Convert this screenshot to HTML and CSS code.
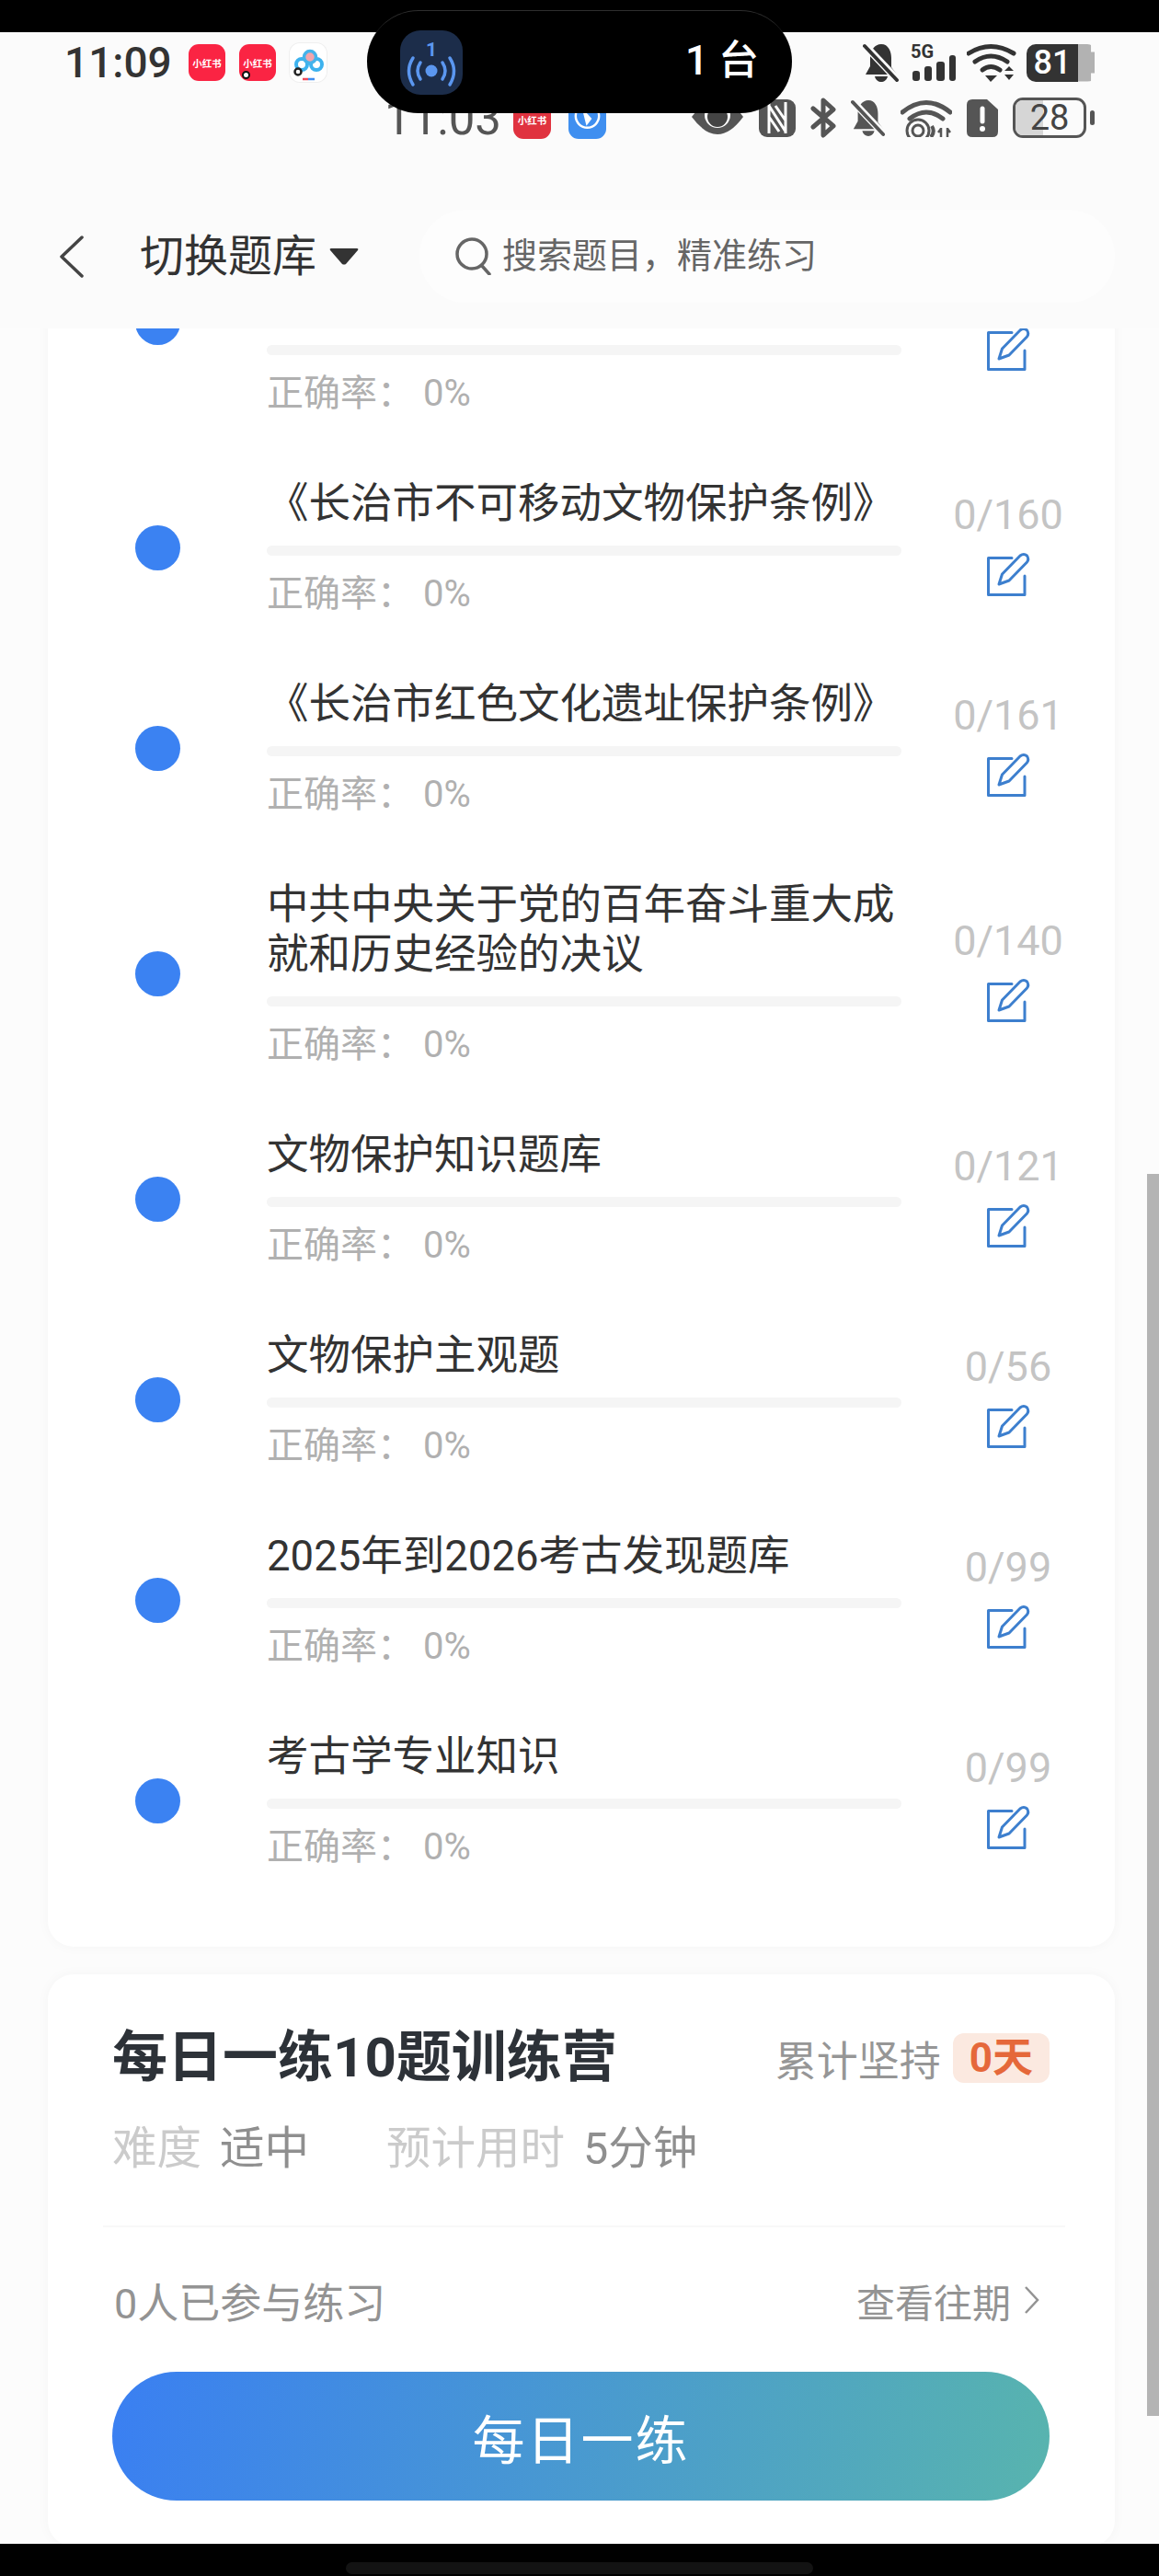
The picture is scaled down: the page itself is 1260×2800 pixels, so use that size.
FILE: index.html
```html
<!DOCTYPE html>
<html lang="zh-CN">
<head>
<meta charset="utf-8">
<title>切换题库</title>
<link rel="stylesheet" href="styles.css">
</head>
<body>
<svg class="defs" width="0" height="0" aria-hidden="true">
  <symbol id="edit" viewBox="0 0 49 49">
    <path d="M28 7.500H2.500V47.500H42V27" fill="none" stroke="#3d7fce" stroke-width="3" stroke-linejoin="round" stroke-linecap="round"/>
    <path d="M14 36L17.500 25L37 5Q41 2 44.500 5Q47 8.500 44.500 12L25 32Z" fill="none" stroke="#3d7fce" stroke-width="3" stroke-linejoin="round"/>
  </symbol>
  <symbol id="bell" viewBox="0 0 40 42">
    <path d="M20 1C28 1 31 9 31 16V26L37 34H3L8 25V15C8 8 13 1 20 1Z" />
    <path d="M13 36H27C26 40 23 42 20 42C17 42 14 40 13 36Z"/>
    <path d="M2 2L38 40" stroke="#fbfbfb" stroke-width="8"/>
    <path d="M2 3L37 40" stroke="currentColor" stroke-width="4" stroke-linecap="round"/>
  </symbol>
</svg>

<div class="screen">
  <div class="black-top"></div>
  <header class="header">
    <div class="status">
      <div class="status-left">
        <span class="clock">11:09</span>
        <span class="app red">小红书</span>
        <span class="app red">小红书<i class="ring"></i></span>
        <span class="app cloud">
          <svg width="40" height="42" viewBox="0 0 40 42">
            <circle cx="13" cy="23" r="6" fill="none" stroke="#3db2ee" stroke-width="4"/>
            <circle cx="29" cy="23" r="6" fill="none" stroke="#3db2ee" stroke-width="4"/>
            <circle cx="22" cy="15" r="6.500" fill="#f3a5ac" stroke="#45b3ea" stroke-width="3.500"/>
            <circle cx="9" cy="31" r="3.500" fill="#fff" stroke="#222" stroke-width="2.500"/>
            <path d="M14 39H20" stroke="#ef4a5b" stroke-width="2.500"/>
            <path d="M20 39H27" stroke="#3f8ef0" stroke-width="2.500"/>
          </svg>
        </span>
      </div>
      <div class="status-right">
        <svg class="ic-bell" width="40" height="42"><use href="#bell"/></svg>
        <div class="net">
          <span class="five-g">5G</span>
          <svg width="50" height="42" viewBox="0 0 50 42">
            <rect x="2" y="30" width="8" height="11" rx="3"/>
            <rect x="15" y="25" width="8" height="16" rx="3"/>
            <rect x="28" y="20" width="9" height="21" rx="3"/>
            <rect x="42" y="13" width="7" height="28" rx="3"/>
          </svg>
        </div>
        <svg width="54" height="42" viewBox="0 0 54 42">
          <path d="M2 11Q26 -4 51 11" fill="none" stroke="#333" stroke-width="5" stroke-linecap="round"/>
          <path d="M9 20Q26 8 44 20" fill="none" stroke="#333" stroke-width="5" stroke-linecap="round"/>
          <path d="M17 29Q26 22 36 29" fill="none" stroke="#333" stroke-width="5" stroke-linecap="round"/>
          <path d="M20 35H33L26 42Z" fill="#333"/>
          <path d="M41 30L46 25L51 30ZM41 34H51L46 40Z" fill="#333"/>
        </svg>
        <div class="batt"><span class="batt-fill">81</span><span class="batt-rest"></span></div>
      </div>
    </div>

    <div class="status ghost">
      <div class="status-left">
        <span class="clock">11:03</span>
        <span class="app red dim">小红书</span>
        <span class="app blue">
          <svg width="42" height="42" viewBox="0 0 42 42"><circle cx="21" cy="17" r="13" fill="none" stroke="#fff" stroke-width="2.500"/><path d="M15 8L26 20L20 28Z" fill="#fff"/></svg>
        </span>
      </div>
      <div class="status-right ghost-right">
        <svg width="58" height="42" viewBox="0 0 58 42">
          <path d="M1 20Q29 -18 57 20Q29 58 1 20Z" fill="#555"/>
          <circle cx="29" cy="18" r="14" fill="#fff"/>
          <circle cx="29" cy="20" r="11" fill="#444"/>
        </svg>
        <svg width="40" height="42" viewBox="0 0 40 42">
          <rect x="0" y="1" width="40" height="41" rx="9" fill="#555"/>
          <path d="M11 4V38M29 4V38M11 8L29 36M18 8L29 24M11 20L22 36" fill="none" stroke="#fff" stroke-width="3"/>
        </svg>
        <svg width="28" height="44" viewBox="0 0 28 44">
          <path d="M3 12L25 31L14 41V3L25 13L3 32" fill="none" stroke="#555" stroke-width="5" stroke-linecap="round" stroke-linejoin="round"/>
        </svg>
        <svg class="ic-bell2" width="38" height="42"><use href="#bell"/></svg>
        <svg width="56" height="42" viewBox="0 0 56 42">
          <path d="M2 15Q28 -6 54 15" fill="none" stroke="#555" stroke-width="5" stroke-linecap="round"/>
          <path d="M10 22Q28 8 46 22" fill="none" stroke="#555" stroke-width="5" stroke-linecap="round"/>
          <circle cx="19" cy="35" r="12" fill="none" stroke="#555" stroke-width="3"/>
          <circle cx="19" cy="35" r="6" fill="none" stroke="#555" stroke-width="3"/>
          <path d="M34 30Q38 36 33 42" fill="none" stroke="#555" stroke-width="4"/>
          <path d="M44 32V42M41 37L44 33M51 32V42M54 37L51 33" fill="none" stroke="#555" stroke-width="2.500"/>
        </svg>
        <svg width="34" height="42" viewBox="0 0 34 42">
          <path d="M6 1H22L34 12V36Q34 42 28 42H6Q0 42 0 36V7Q0 1 6 1Z" fill="#555"/>
          <path d="M17 11V25" stroke="#fff" stroke-width="5" stroke-linecap="round"/>
          <circle cx="17" cy="33" r="3" fill="#fff"/>
        </svg>
        <div class="batt2"><span class="batt2-fill"></span><span class="batt2-num">28</span></div>
        <span class="batt2-tip"></span>
      </div>
    </div>

    <nav class="nav">
      <svg class="back" width="27" height="46" viewBox="0 0 27 46"><path d="M25 2L3 23L25 44" fill="none" stroke="#444" stroke-width="3.500" stroke-linecap="round" stroke-linejoin="round"/></svg>
      <h1 class="nav-title">切换题库</h1>
      <svg class="caret" width="32" height="19" viewBox="0 0 32 19"><path d="M2 1H30Q32 1 31 3L18 18Q16 19 14 18L1 3Q0 1 2 1Z" fill="#333"/></svg>
      <div class="search">
        <svg width="40" height="42" viewBox="0 0 40 42"><circle cx="18" cy="19" r="16" fill="none" stroke="#666" stroke-width="3.500"/><path d="M29 32L37 41" stroke="#666" stroke-width="3.500" stroke-linecap="round"/></svg>
        <span class="search-text">搜索题目&#xFF0C;精准练习</span>
      </div>
    </nav>
  </header>

  <main class="viewport">
    <section class="card list">
      <div class="row">
        <i class="dot"></i>
        <div class="row-body"><div class="row-title">&nbsp;<br>&nbsp;</div><div class="bar"></div><div class="rate">正确率&#xFF1A;&nbsp;0%</div></div>
        <div class="row-side"><span class="count">&nbsp;</span><svg class="edit"><use href="#edit"/></svg></div>
      </div>
      <div class="row">
        <i class="dot"></i>
        <div class="row-body"><div class="row-title">《长治市不可移动文物保护条例》</div><div class="bar"></div><div class="rate">正确率&#xFF1A;&nbsp;0%</div></div>
        <div class="row-side"><span class="count">0/160</span><svg class="edit"><use href="#edit"/></svg></div>
      </div>
      <div class="row">
        <i class="dot"></i>
        <div class="row-body"><div class="row-title">《长治市红色文化遗址保护条例》</div><div class="bar"></div><div class="rate">正确率&#xFF1A;&nbsp;0%</div></div>
        <div class="row-side"><span class="count">0/161</span><svg class="edit"><use href="#edit"/></svg></div>
      </div>
      <div class="row">
        <i class="dot"></i>
        <div class="row-body"><div class="row-title">中共中央关于党的百年奋斗重大成就和历史经验的决议</div><div class="bar"></div><div class="rate">正确率&#xFF1A;&nbsp;0%</div></div>
        <div class="row-side"><span class="count">0/140</span><svg class="edit"><use href="#edit"/></svg></div>
      </div>
      <div class="row">
        <i class="dot"></i>
        <div class="row-body"><div class="row-title">文物保护知识题库</div><div class="bar"></div><div class="rate">正确率&#xFF1A;&nbsp;0%</div></div>
        <div class="row-side"><span class="count">0/121</span><svg class="edit"><use href="#edit"/></svg></div>
      </div>
      <div class="row">
        <i class="dot"></i>
        <div class="row-body"><div class="row-title">文物保护主观题</div><div class="bar"></div><div class="rate">正确率&#xFF1A;&nbsp;0%</div></div>
        <div class="row-side"><span class="count">0/56</span><svg class="edit"><use href="#edit"/></svg></div>
      </div>
      <div class="row">
        <i class="dot"></i>
        <div class="row-body"><div class="row-title">2025年到2026考古发现题库</div><div class="bar"></div><div class="rate">正确率&#xFF1A;&nbsp;0%</div></div>
        <div class="row-side"><span class="count">0/99</span><svg class="edit"><use href="#edit"/></svg></div>
      </div>
      <div class="row">
        <i class="dot"></i>
        <div class="row-body"><div class="row-title">考古学专业知识</div><div class="bar"></div><div class="rate">正确率&#xFF1A;&nbsp;0%</div></div>
        <div class="row-side"><span class="count">0/99</span><svg class="edit"><use href="#edit"/></svg></div>
      </div>
    </section>

    <section class="card daily">
      <div class="daily-head">
        <h2 class="daily-title">每日一练10题训练营</h2>
        <div class="streak"><span>累计坚持</span><b class="streak-badge">0天</b></div>
      </div>
      <div class="meta">
        <span class="meta-label">难度</span><span class="meta-value">适中</span>
        <span class="meta-label meta-gap">预计用时</span><span class="meta-value">5分钟</span>
      </div>
      <div class="divider"></div>
      <div class="foot">
        <span class="joined">0人已参与练习</span>
        <span class="history">查看往期<svg width="17" height="32" viewBox="0 0 17 32"><path d="M2 2L15 16L2 30" fill="none" stroke="#939393" stroke-width="2.500"/></svg></span>
      </div>
      <button class="cta">每日一练</button>
    </section>
  </main>

  <div class="black-bottom"><span class="home"></span></div>

  <div class="island">
    <span class="island-icon">
      <svg width="68" height="70" viewBox="0 0 68 70">
        <text x="34" y="28" text-anchor="middle" class="island-one">1</text>
        <circle cx="34" cy="44" r="6.500" fill="#5b97f0"/>
        <path d="M22 35Q16 44 22 53M46 35Q52 44 46 53M14 30Q5 44 14 59M54 30Q63 44 54 59" fill="none" stroke="#5b97f0" stroke-width="3.500" stroke-linecap="round"/>
      </svg>
    </span>
    <span class="island-text">1 台</span>
  </div>
  <div class="scrollbar"></div>
</div>
</body>
</html>
```

FILE: styles.css
```css
* { box-sizing: border-box; }
html, body { margin: 0; padding: 0; }
body {
  width: 1260px;
  height: 2800px;
  overflow: hidden;
  font-family: Roboto, "Noto Sans CJK SC", sans-serif;
  color: #333;
  background: #000;
}
.defs { position: absolute; }
.screen {
  position: relative;
  width: 1260px;
  height: 2800px;
  display: flex;
  flex-direction: column;
  overflow: hidden;
}
.black-top { height: 35px; flex: none; background: #000; }

/* header */
.header {
  flex: none;
  height: 322px;
  background: #fbfbfb;
  padding-top: 12px;
  position: relative;
  z-index: 2;
}
.status {
  display: flex;
  justify-content: space-between;
  align-items: center;
  height: 42px;
  padding: 0 70px;
}
.status-left { display: flex; align-items: center; }
.clock {
  font-size: 46px;
  font-weight: 500;
  line-height: 42px;
  width: 135px;
  color: #333;
}
.app {
  position: relative;
  width: 40px;
  height: 40px;
  margin-right: 15px;
  border-radius: 11px;
  display: flex;
  align-items: center;
  justify-content: center;
  font-size: 10.5px;
  font-weight: 700;
  overflow: visible;
}
.red { background: #fa2443; color: #fff; }
.ring {
  position: absolute;
  left: 3px;
  bottom: 2px;
  width: 9px;
  height: 9px;
  border: 2.5px solid #111;
  border-radius: 50%;
  background: #fff;
}
.cloud { background: #fff; box-shadow: 0 0 0 1px #efefef; height: 42px; }
.status-right { display: flex; align-items: center; gap: 11px; }
.ic-bell { color: #333; fill: #333; margin-right: 1px; }
.net { position: relative; width: 50px; height: 42px; }
.net svg { fill: #333; display: block; }
.five-g {
  position: absolute;
  left: 0;
  top: -1px;
  font-size: 20px;
  line-height: 20px;
  font-weight: 700;
  color: #333;
}
.batt { display: flex; align-items: stretch; height: 41px; }
.batt-fill {
  width: 56px;
  background: #333;
  color: #fff;
  border-radius: 10px 0 0 10px;
  font-size: 36px;
  font-weight: 500;
  line-height: 41px;
  text-align: center;
}
.batt-rest {
  width: 18px;
  background: #b2b2b2;
  border-radius: 0 8px 8px 0;
  clip-path: polygon(0 0, 78% 0, 78% 22%, 100% 22%, 100% 78%, 78% 78%, 78% 100%, 0 100%);
}

.ghost { margin-top: 17px; height: 44px; padding-left: 418px; }
.ghost .clock { color: #555; width: 140px; font-size: 51px; font-weight: 400; position: relative; top: 1px; }
.ghost .app { width: 41px; height: 41px; margin-right: 19px; position: relative; top: 2px; }
.dim { background: #e0323f; }
.blue { background: #3f8ff0; }
.ghost-right { gap: 16px; }
.ic-bell2 { color: #555; fill: #555; }
.batt2 {
  position: relative;
  width: 80px;
  height: 44px;
  border: 3.5px solid #555;
  border-radius: 11px;
  overflow: hidden;
  display: flex;
  align-items: center;
  justify-content: center;
}
.batt2-fill {
  position: absolute;
  left: 0;
  top: 0;
  bottom: 0;
  width: 30px;
  background: #d6d6d6;
}
.batt2-num {
  position: relative;
  font-size: 38px;
  line-height: 38px;
  color: #444;
}
.batt2-tip {
  width: 5px;
  height: 16px;
  border-radius: 3px;
  background: #555;
  margin-left: -12px;
}

.nav {
  display: flex;
  align-items: center;
  height: 101px;
  margin-top: 78px;
  padding-left: 64px;
  padding-right: 48px;
}
.back { flex: none; margin-right: 61px; }
.nav-title {
  margin: 0 14px 0 0;
  font-size: 48px;
  font-weight: 400;
  line-height: 60px;
  color: #333;
  white-space: nowrap;
}
.caret { flex: none; margin-right: 66px; }
.search {
  flex: 1;
  height: 101px;
  border-radius: 51px;
  background: #fdfdfd;
  display: flex;
  align-items: center;
  gap: 11px;
  padding-left: 39px;
  padding-bottom: 2px;
  font-size: 38px;
  color: #666;
}
.search-text { margin-top: -7px; }

/* content */
.viewport {
  flex: 1;
  min-height: 0;
  overflow: hidden;
  background: #fcfcfc;
}
.card {
  margin: 0 48px 0 52px;
  background: #fff;
  border-radius: 28px;
  box-shadow: 0 0 14px rgba(0, 0, 0, 0.035);
}
.list { margin-top: -142px; padding-bottom: 49px; }
.row {
  display: flex;
  align-items: center;
  padding: 34px 20px 35px 95px;
}
.dot {
  flex: none;
  width: 49px;
  height: 49px;
  border-radius: 50%;
  background: #3b82f2;
  margin-right: 94px;
}
.row-body { width: 690px; flex: none; }
.row-title {
  font-size: 45.5px;
  line-height: 54px;
  color: #333;
}
.bar {
  height: 11px;
  margin-top: 18px;
  border-radius: 6px;
  background: #f5f5f5;
}
.rate {
  margin-top: 18px;
  font-size: 40px;
  line-height: 48px;
  color: #b0b0b0;
}
.row-side {
  flex: 1;
  display: flex;
  flex-direction: column;
  align-items: center;
  margin-left: 20px;
  margin-top: -1px;
}
.count {
  font-size: 45px;
  line-height: 36px;
  color: #c4c4c4;
}
.edit { width: 49px; height: 49px; margin-top: 21px; }

/* daily card */
.daily {
  margin-top: 30px;
  padding: 56px 71px 50px 70px;
}
.daily-head {
  display: flex;
  justify-content: space-between;
  align-items: center;
  height: 70px;
}
.daily-title {
  margin: 0;
  font-size: 60px;
  font-weight: 700;
  line-height: 70px;
  color: #2d3238;
}
.streak {
  display: flex;
  align-items: center;
  gap: 13px;
  font-size: 45px;
  color: #969696;
}
.streak-badge {
  height: 54px;
  padding: 0 18px;
  border-radius: 12px;
  background: #fbe9e0;
  color: #e5683a;
  font-size: 44px;
  font-weight: 700;
  line-height: 54px;
}
.meta {
  display: flex;
  margin-top: 34px;
  font-size: 48.5px;
  line-height: 60px;
}
.meta-label { color: #cbcbcb; margin-right: 20px; }
.meta-value { color: #8f8f8f; }
.meta-gap { margin-left: 84px; }
.divider {
  height: 2px;
  margin: 53px -17px 0 -10px;
  background: #f8f8f8;
}
.foot {
  display: flex;
  justify-content: space-between;
  align-items: center;
  height: 60px;
  margin-top: 49px;
  color: #939393;
}
.joined { font-size: 45px; margin-left: 2px; }
.history {
  display: flex;
  align-items: center;
  gap: 14px;
  font-size: 42px;
  padding-right: 11px;
}
.cta {
  display: block;
  width: 100%;
  height: 140px;
  margin-top: 48px;
  border: 0;
  border-radius: 70px;
  background: linear-gradient(100deg, #3a7ff2 0%, #58b4ae 100%);
  color: #fff;
  font-family: inherit;
  font-size: 57px;
  letter-spacing: 2px;
}

.black-bottom {
  flex: none;
  height: 35px;
  background: #000;
  display: flex;
  justify-content: center;
  padding-top: 20px;
}
.home {
  width: 508px;
  height: 13px;
  border-radius: 7px;
  background: #131313;
}

/* overlays */
.island {
  position: absolute;
  z-index: 5;
  left: 399px;
  top: 11px;
  width: 462px;
  height: 112px;
  border-radius: 56px;
  background: #000;
  border-top: 1.5px solid #2e2e2e;
  display: flex;
  align-items: center;
  justify-content: space-between;
  padding: 0 36px 0 36px;
}
.island-icon {
  width: 68px;
  height: 70px;
  border-radius: 22px;
  background: #1c2d4a;
  display: block;
}
.island-icon svg { display: block; }
.island-one {
  font-family: Roboto, sans-serif;
  font-size: 21px;
  font-weight: 700;
  fill: #5b97f0;
}
.island-text { font-size: 44px; font-weight: 500; color: #fff; line-height: 60px; margin-top: -3px; }
.scrollbar {
  position: absolute;
  z-index: 3;
  left: 1247px;
  top: 1276px;
  width: 13px;
  height: 1350px;
  background: #b4b4b4;
}
```
